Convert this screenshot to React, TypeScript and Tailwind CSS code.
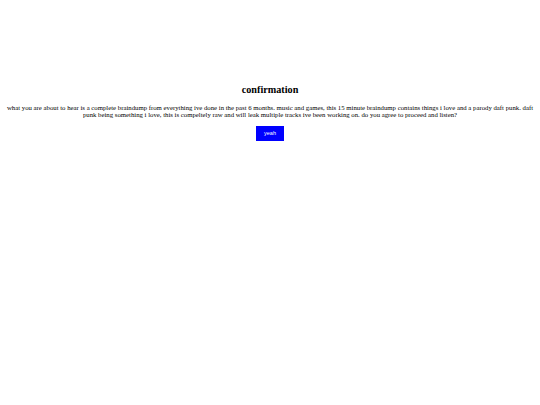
export default function App() {
  return (
    <div className="min-h-[405px] w-[540px] bg-white text-black" style={{ fontFamily: '"Liberation Serif", "Times New Roman", serif' }}>
      <div className="flex flex-col items-center pt-[84px] px-[7px] text-center">
        <h2 className="text-[10.2px] font-bold leading-[12px]">confirmation</h2>
        <p className="mt-[8px] text-[6.75px] leading-[7.4px]">
          what you are about to hear is a complete braindump from everything ive done in the past 6 months. music and games, this 15 minute braindump contains things i love and a parody daft punk. daft punk being something i love, this is compeltely raw and will leak multiple tracks ive been working on. do you agree to proceed and listen?
        </p>
        <button
          className="mt-[7px] h-[15px] w-[28px] bg-[#0000ff] text-[5.5px] text-white"
          style={{ fontFamily: '"Liberation Sans", Arial, sans-serif' }}
        >
          yeah
        </button>
      </div>
    </div>
  );
}
